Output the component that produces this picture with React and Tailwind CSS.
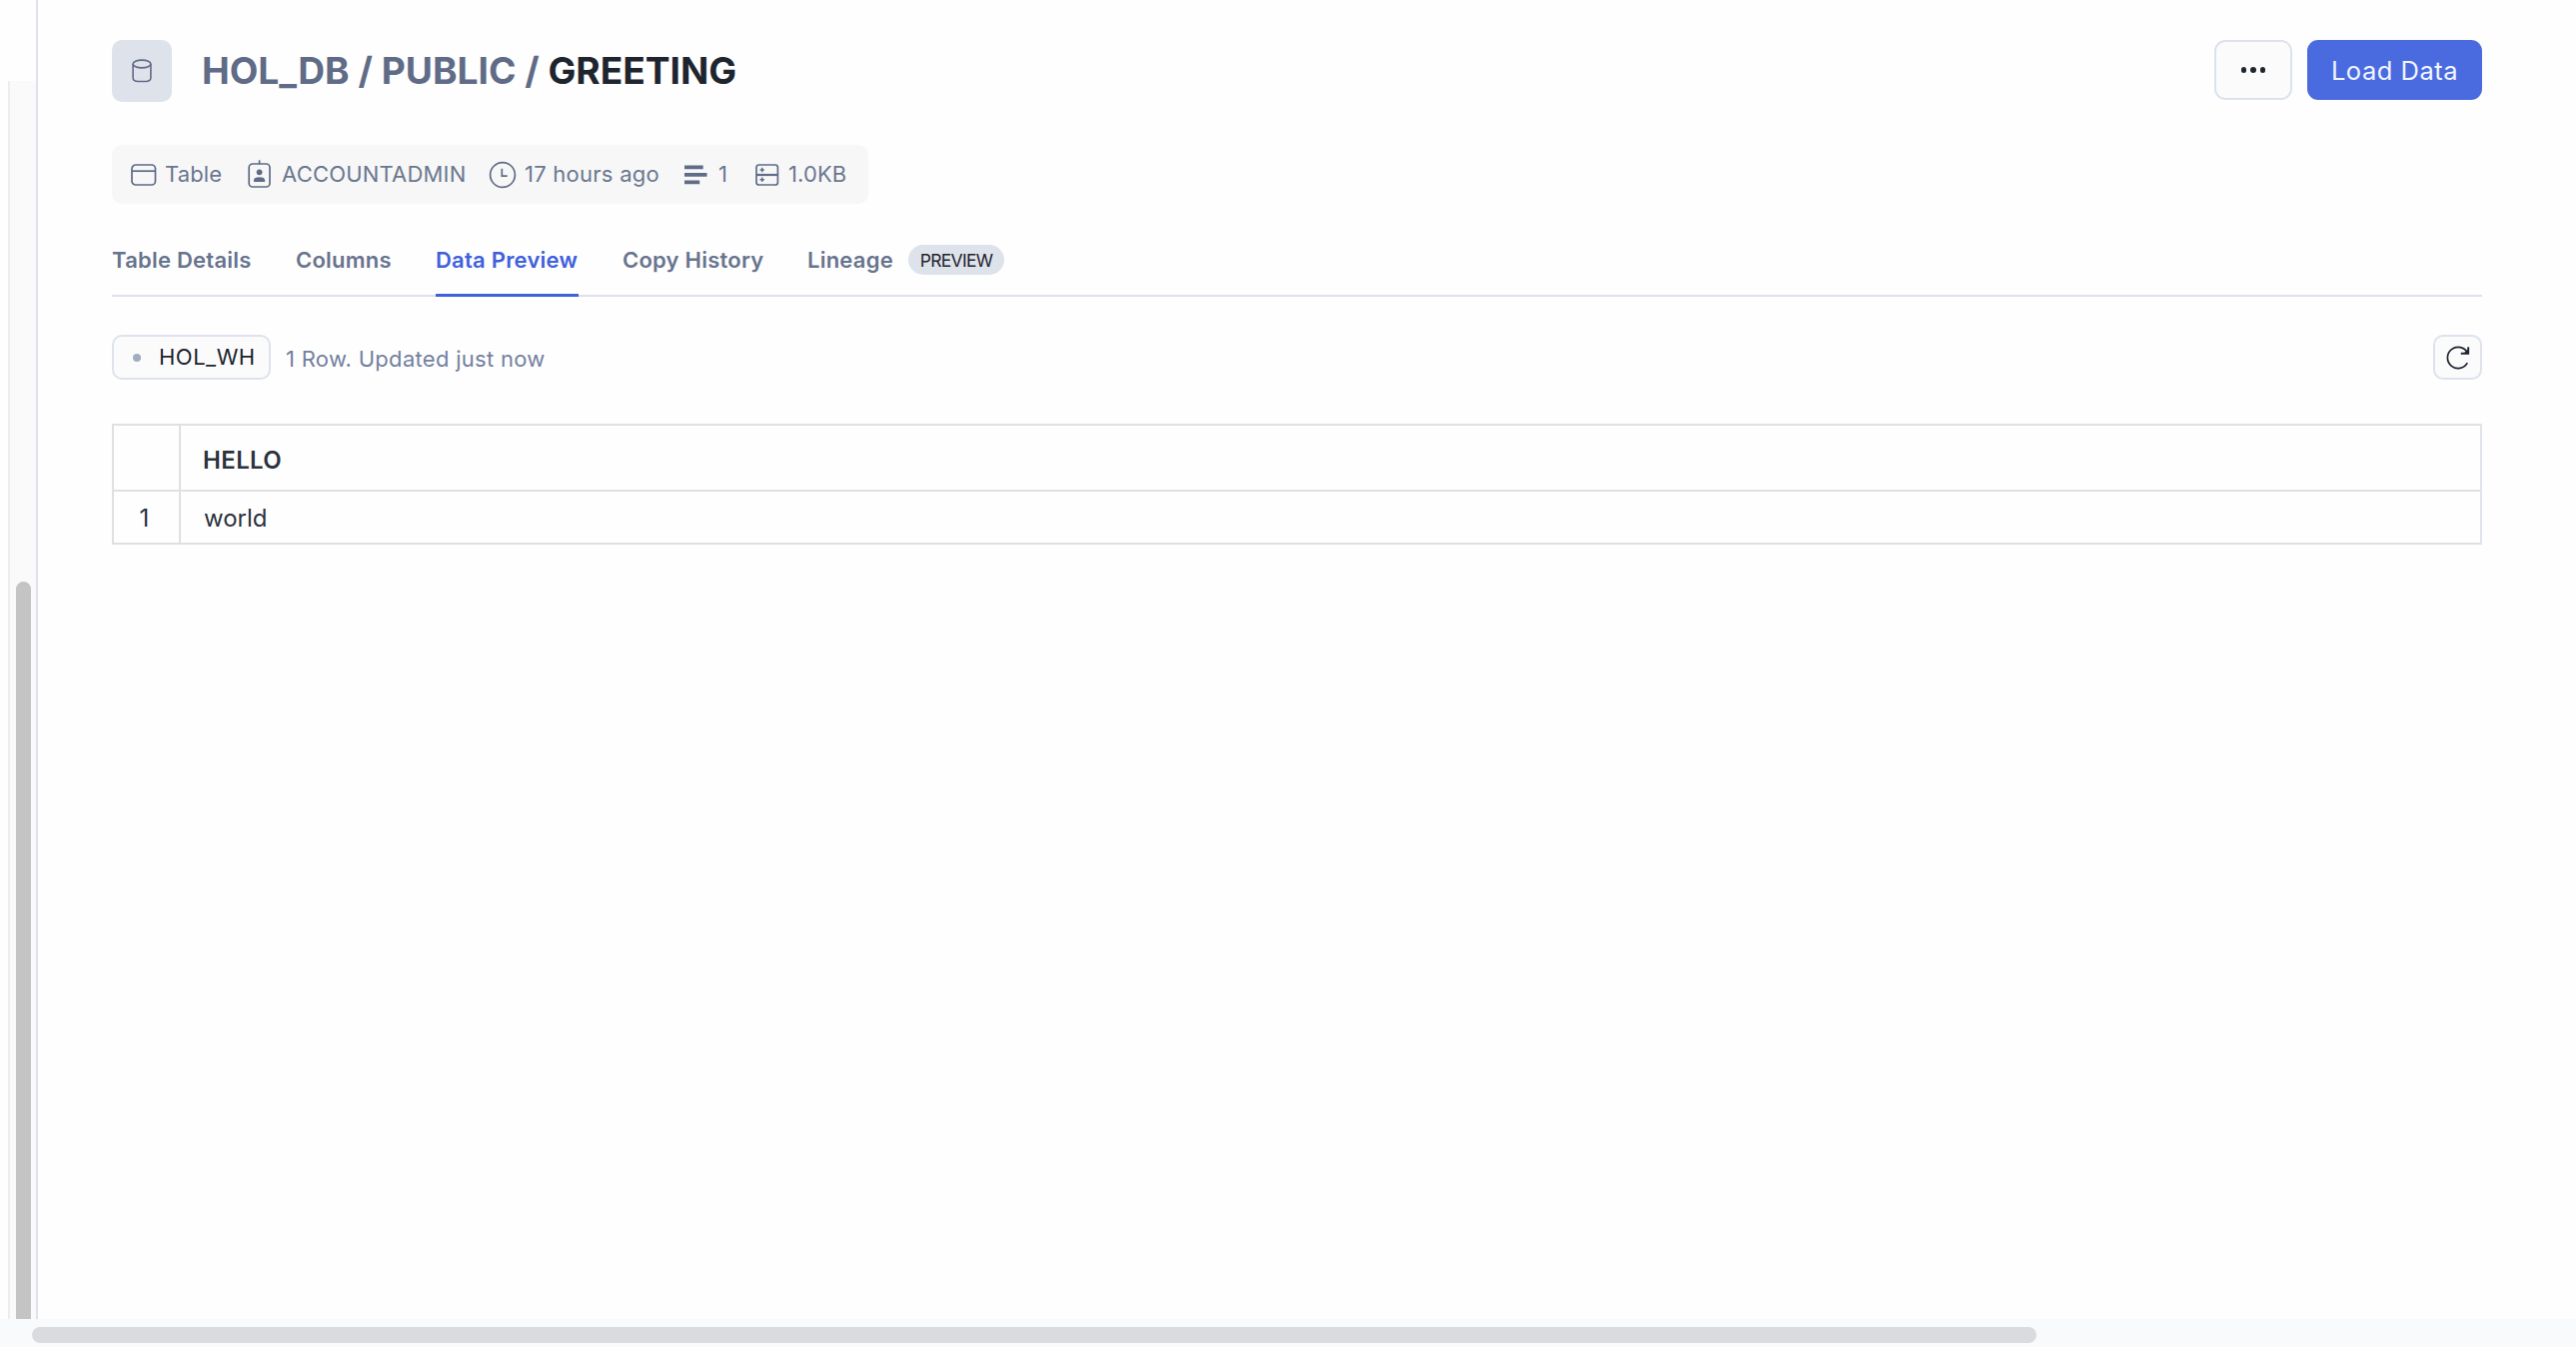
const TableIcon = () => (
  <svg className="h-[22px] w-[26px]" viewBox="0 0 26 22" fill="none" stroke="currentColor" strokeWidth="1.7">
    <rect x="1" y="1" width="23.5" height="20" rx="3.8" />
    <path d="M1 7.2h23.5" />
  </svg>
);

const RoleIcon = () => (
  <svg className="-mt-px h-[28px] w-[24px]" viewBox="0 0 24 28" fill="none" stroke="currentColor" strokeWidth="1.7">
    <rect x="1.2" y="4" width="20.8" height="23" rx="3.6" />
    <path d="M11.6 .3v4" />
    <circle cx="11.6" cy="12.3" r="2.9" fill="currentColor" stroke="none" />
    <path d="M6 22v-1.3c0-2.3 2-3.4 5.6-3.4s5.6 1.1 5.6 3.4V22z" fill="currentColor" stroke="none" />
  </svg>
);

const ClockIcon = () => (
  <svg className="h-[28px] w-[28px]" viewBox="0 0 28 28" fill="none" stroke="currentColor" strokeWidth="1.7">
    <circle cx="14" cy="14" r="12.4" />
    <path d="M13.3 7.8v7.4h5.4" />
  </svg>
);

const RowsIcon = () => (
  <svg className="h-[20px] w-[24px]" viewBox="0 0 24 20" fill="currentColor">
    <path d="M0 .5h18.7v3.7H0zM0 8h22.5v3.7H0zM0 15.5h15.2v3.7H0z" />
  </svg>
);

const StorageIcon = () => (
  <svg className="h-[22px] w-[24px]" viewBox="0 0 24 22" fill="none" stroke="currentColor" strokeWidth="1.7">
    <rect x="1" y="1" width="21.4" height="20" rx="2.6" />
    <path d="M1 11h21.4" strokeWidth="2.2" />
    <path d="M6.7 3.8v4.4M4.5 6h4.4M6.7 13.6V18M4.5 15.8h4.4" strokeWidth="1.5" />
  </svg>
);

const DatabaseIcon = () => (
  <svg className="h-[24px] w-[20px]" viewBox="0 0 20 24" fill="none" stroke="currentColor" strokeWidth="1.6">
    <ellipse cx="10" cy="5" rx="8.9" ry="3.9" />
    <path d="M1.1 5v13.5c0 2.6 2.3 4 5 4h7.8c2.7 0 5-1.4 5-4V5" />
  </svg>
);

const RefreshIcon = () => (
  <svg className="h-[24px] w-[24px]" viewBox="0 0 24 24" fill="none" stroke="currentColor" strokeWidth="1.7">
    <path d="M21.3 17.1A10.6 10.6 0 1 1 21.5 7.2" />
    <path d="M22.2 1.3v6.5h-7.4" strokeWidth="1.9" />
    <path d="M22.2 3.5v4.3h-5z" fill="currentColor" stroke="none" />
  </svg>
);

const meta = [
  { icon: TableIcon, label: "Table", box: "w-[117px]", gap: "w-[34px]", track: "tracking-[0.1px]" },
  { icon: RoleIcon, label: "ACCOUNTADMIN", box: "w-[241px]", gap: "w-[34px]", track: "tracking-[0.2px]" },
  { icon: ClockIcon, label: "17 hours ago", box: "w-[196px]", gap: "w-[36px]", track: "tracking-[0.25px]" },
  { icon: RowsIcon, label: "1", box: "w-[71px]", gap: "w-[34px]", track: "" },
  { icon: StorageIcon, label: "1.0KB", box: "w-[110px]", gap: "w-[33px]", track: "tracking-[0.1px]" },
];

const tabs = [
  { label: "Table Details", box: "w-[184px]" },
  { label: "Columns", box: "w-[140px]" },
  { label: "Data Preview", box: "w-[143px] mr-[44px]", active: true },
  { label: "Copy History", box: "w-[185px]" },
  { label: "Lineage", box: "w-[101px]" },
];

export default function App() {
  return (
    <div className="flex h-[1348px] w-full flex-col overflow-hidden bg-[#fefefe] font-['Inter',sans-serif] text-[#5f6b87]">
      <div className="flex h-[1320px]">
        <aside className="flex w-[36px] shrink-0 flex-col pt-[81px] pl-2">
          <div className="flex flex-1 flex-col border-l-2 border-[#ededed] bg-[#fafafa] pt-[501px] pl-1.5">
            <div className="w-[15px] flex-1 rounded-t-full bg-[#c4c4c4]" />
          </div>
        </aside>
        <main className="flex flex-1 flex-col border-l-2 border-[#dfe1eb] pt-10 pr-[94px] pl-[74px]">
          <header className="flex h-[62px] items-start">
            <div className="flex h-[62px] w-[60px] items-center justify-center rounded-[10px] bg-[#dee2ea] pb-px">
              <DatabaseIcon />
            </div>
            <h1 className="ml-[30px] flex h-[61px] items-center text-[37.15px] leading-none font-bold whitespace-pre">
              HOL_DB / PUBLIC / <span className="text-[#1e252f]">GREETING</span>
            </h1>
            <div className="ml-auto flex gap-[15px]">
              <button className="flex h-[60px] w-[78px] items-center justify-center gap-[3.8px] rounded-[11px] border-2 border-[#dde2ec] bg-[#fbfbfb]">
                <i className="size-[5.6px] rounded-full bg-[#1e252f]" />
                <i className="size-[5.6px] rounded-full bg-[#1e252f]" />
                <i className="size-[5.6px] rounded-full bg-[#1e252f]" />
              </button>
              <button className="h-[60px] w-[175px] rounded-[11px] bg-[#4a6bdf] pt-px text-[25.5px] leading-none tracking-[0.5px] text-[#f1f5ff]">
                Load Data
              </button>
            </div>
          </header>

          <section className="mt-[43px] flex h-[59px] w-[757px] items-center rounded-[10px] bg-[#f7f7f7] pl-[19px] text-[22px] leading-none text-[#6b7790]">
            {meta.map(({ icon: Icon, label, box, gap, track }) => (
              <div key={label} className={`flex shrink-0 items-center ${box}`}>
                <span className={`flex shrink-0 items-center text-[#5f6b87] ${gap}`}>
                  <Icon />
                </span>
                <span className={`pb-0.5 whitespace-nowrap ${track}`}>{label}</span>
              </div>
            ))}
          </section>

          <nav className="flex h-[93px] border-b-2 border-[#dde2ea] text-[22px] leading-none font-semibold tracking-[0.23px] text-[#68748e]">
            {tabs.map(({ label, box, active }) => (
              <div
                key={label}
                className={`-mb-0.5 flex h-[93px] shrink-0 items-center whitespace-nowrap ${box} ${
                  active ? "border-b-3 border-[#4060dc] pt-[21px] text-[#4060dc]" : "pt-[18px]"
                }`}
              >
                {label}
              </div>
            ))}
            <div className="mt-[41px] flex h-[30px] w-[96px] items-center justify-center rounded-full bg-[#dee2ea] pt-0.5 text-[17.5px] font-normal tracking-[-0.7px] text-[#1e252f]">
              PREVIEW
            </div>
          </nav>

          <section className="mt-[38px] flex h-[45px] items-center text-[22px] leading-none">
            <button className="flex h-[45px] w-[159px] items-center rounded-[10px] border-2 border-[#dde2ec] bg-[#fbfbfb] pl-[19px] text-[#1e252f]">
              <i className="mr-[18px] size-2 rounded-full bg-[#a2adc0]" />
              <span className="pb-0.5 tracking-[0.5px]">HOL_WH</span>
            </button>
            <span className="ml-[15px] pt-0.5 tracking-[0.29px] text-[#7480a0]">1 Row. Updated just now</span>
            <button className="ml-auto flex h-[45px] w-[49px] items-center justify-center rounded-[10px] border-2 border-[#dde2ec] bg-[#fbfbfb] text-[#1e252f]">
              <RefreshIcon />
            </button>
          </section>

          <section className="mt-[44px] grid h-[121px] grid-cols-[67px_1fr] grid-rows-[66px_1fr] border-2 border-[#e0e0e0] border-r-[#dfe3ed] text-[24px] leading-none text-[#2c333d]">
            <div className="border-r-2 border-b-2 border-[#e0e0e0]" />
            <div className="flex items-center border-b-2 border-[#e0e0e0] pt-[6px] pl-[22px] font-semibold tracking-[0.35px]">HELLO</div>
            <div className="flex items-center justify-center border-r-2 border-[#e0e0e0] pt-0.5 pr-1">1</div>
            <div className="flex items-center pt-0.5 pl-[23px]">world</div>
          </section>
        </main>
      </div>
      <footer className="flex h-7 shrink-0 items-start bg-[#f9fafc] pt-2 pl-8">
        <div className="h-4 w-[2006px] rounded-full bg-[#dadbdf]" />
      </footer>
    </div>
  );
}
